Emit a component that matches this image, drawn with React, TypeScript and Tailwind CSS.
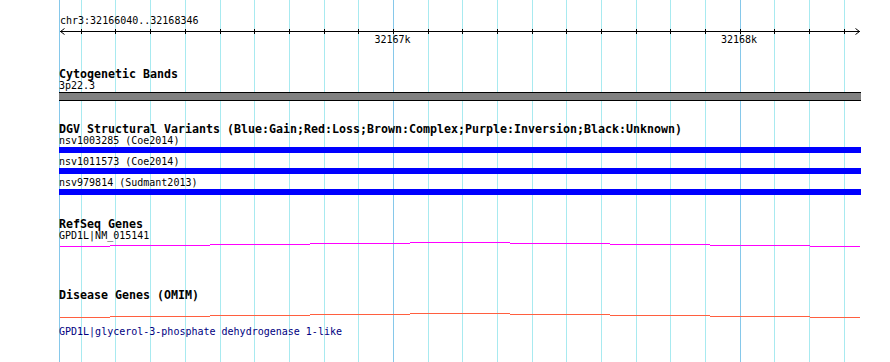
import React from "react";

const mono = { fontFamily: '"DejaVu Sans Mono", "Liberation Mono", monospace' };

const gridXs = Array.from({ length: 23 }, (_, k) => Math.floor(81.3 + k * 34.684));
const majors = new Set([9, 19]);

function Grid() {
  return (
    <svg className="absolute left-0 top-0" width={890} height={362}>
      <rect x={59} y={0} width={1} height={362} fill="#86c8ea" />
      {gridXs.map((x, k) => (
        <rect key={k} x={x} y={0} width={1} height={362} fill={majors.has(k) ? "#86c8ea" : "#a8eaf0"} />
      ))}
    </svg>
  );
}

function Ruler() {
  return (
    <svg width={890} height={20} className="block" style={mono}>
      <line x1={60} y1={5.5} x2={860} y2={5.5} stroke="#000" strokeWidth={1} />
      <polyline points="64.5,2.5 60.5,5.5 64.5,8.5" fill="none" stroke="#000" strokeWidth={1} />
      <polyline points="855.5,2.5 859.5,5.5 855.5,8.5" fill="none" stroke="#000" strokeWidth={1} />
      {gridXs.map((x, k) => (
        <line key={k} x1={x + 0.5} y1={3} x2={x + 0.5} y2={8} stroke="#000" strokeWidth={1} />
      ))}
      <text x={392.5} y={17} textAnchor="middle" fontSize={10} fill="#000">32167k</text>
      <text x={739} y={17} textAnchor="middle" fontSize={10} fill="#000">32168k</text>
    </svg>
  );
}

function StepLine({ ys, color, offset, height }: { ys: number[]; color: string; offset: number; height: number }) {
  const segs: [number, number][] = [[60, 110], [110, 210], [210, 310], [310, 410], [410, 510], [510, 610], [610, 710], [710, 810], [810, 860]];
  return (
    <svg width={890} height={height} className="block">
      {segs.map(([a, b], i) => (
        <rect key={i} x={a} y={ys[i] - offset} width={b - a} height={1} fill={color} />
      ))}
    </svg>
  );
}

function VariantRow({ label, last }: { label: string; last?: boolean }) {
  return (
    <div className="flex flex-col">
      <div className="pl-[59px] h-[10px] text-[10px] leading-[10px] text-black whitespace-pre">{label}</div>
      <div className="ml-[59px] mt-[1px] h-[6px] w-[802px] bg-[#0000ff]" />
      {!last && <div className="h-[4px]" />}
    </div>
  );
}

export default function App() {
  return (
    <div className="relative w-[890px] h-[362px] bg-white overflow-hidden" style={mono}>
      <Grid />
      <div className="relative flex flex-col">
        <div className="pl-[60px] mt-[16px] h-[10px] text-[10px] leading-[10px] text-black">chr3:32166040..32168346</div>
        <Ruler />
        <div className="pl-[59px] mt-[22px] h-[12px] text-[11.63px] leading-[12px] font-bold text-black">Cytogenetic Bands</div>
        <div className="pl-[59px] mt-[1px] h-[10px] text-[10px] leading-[10px] text-black">3p22.3</div>
        <div className="ml-[59px] mt-[1px] h-[9px] w-[802px] bg-[#808080] border-y border-black" />
        <div className="pl-[59px] mt-[22px] h-[12px] text-[11.63px] leading-[12px] font-bold text-black whitespace-pre">DGV Structural Variants (Blue:Gain;Red:Loss;Brown:Complex;Purple:Inversion;Black:Unknown)</div>
        <div className="mt-[1px] flex flex-col">
          <VariantRow label="nsv1003285 (Coe2014)" />
          <VariantRow label="nsv1011573 (Coe2014)" />
          <VariantRow label="nsv979814 (Sudmant2013)" last />
        </div>
        <div className="pl-[59px] mt-[23px] h-[12px] text-[11.63px] leading-[12px] font-bold text-black">RefSeq Genes</div>
        <div className="pl-[59px] mt-[1px] h-[10px] text-[10px] leading-[10px] text-black">GPD1L|NM_015141</div>
        <StepLine ys={[246, 245, 244, 243, 242, 243, 244, 245, 246]} color="#ff00ff" offset={241} height={7} />
        <div className="pl-[59px] mt-[41px] h-[12px] text-[11.63px] leading-[12px] font-bold text-black">Disease Genes (OMIM)</div>
        <StepLine ys={[317, 316, 315, 314, 313, 314, 315, 316, 317]} color="#ff5f3f" offset={301} height={19} />
        <div className="pl-[59px] mt-[7px] h-[10px] text-[10px] leading-[10px] text-[#00007f] whitespace-pre">GPD1L|glycerol-3-phosphate dehydrogenase 1-like</div>
      </div>
    </div>
  );
}
